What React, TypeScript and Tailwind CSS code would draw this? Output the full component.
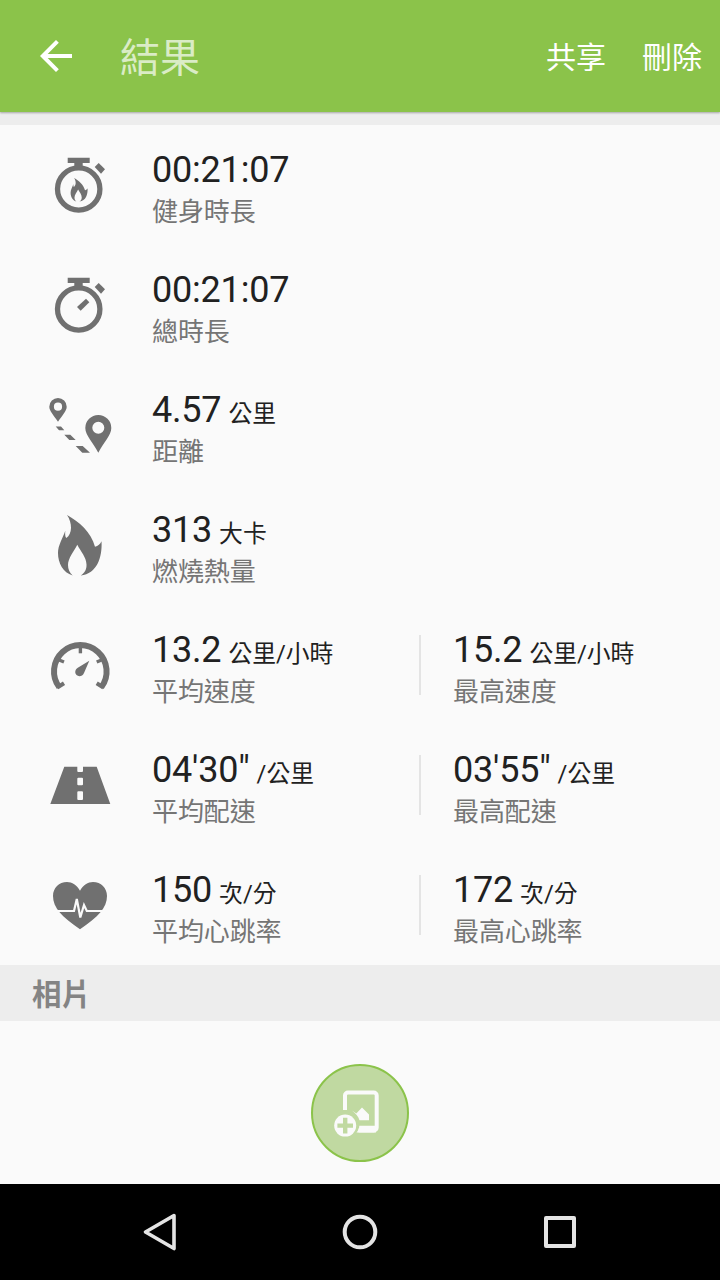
import type { ReactNode } from "react";

type Stat = {
  value: string;
  unit?: string;
  label: string;
};

type Row = {
  icon: ReactNode;
  stats: Stat[];
};

const FLAME =
  "M19 2C31 8.5 43 19 47 33.7C50 33 52.3 31 53.5 28.3C54.5 44 49 61 32.7 62.5C37 60 38.7 56 38.5 51.5C38.3 44 33 39 29.3 31.7C26 38.5 20 45 20 52C20 56 21.5 60 24.7 62.5C15 59.5 10 50 10 40C10 32 14.5 26 17.3 17.7C17 21 17 23.5 18.3 25C24.5 21 24.5 10 19 2Z";

function Icon({ children }: { children: ReactNode }) {
  return (
    <svg viewBox="0 0 64 64" className="size-16 shrink-0 fill-current text-[#707070]">
      {children}
    </svg>
  );
}

function Stopwatch({ children }: { children: ReactNode }) {
  return (
    <Icon>
      <circle cx="30.7" cy="36" r="21.2" fill="none" stroke="currentColor" strokeWidth="5.3" />
      <path d="M19.7 4.7H41.7V10H34.7V14.5H26.3V10H19.7Z" />
      <path d="M50.7 10L57 16.3L53 20.7L46.7 14Z" />
      {children}
    </Icon>
  );
}

function WorkoutIcon() {
  return (
    <Stopwatch>
      <path d={FLAME} transform="translate(18.7 24.2) scale(0.39)" />
    </Stopwatch>
  );
}

function DurationIcon() {
  return (
    <Stopwatch>
      <path d="M38 25.7L41.3 29.3L32.7 37.7L29 34Z" />
    </Stopwatch>
  );
}

function DistanceIcon() {
  return (
    <Icon>
      <path
        fillRule="evenodd"
        d="M10 5A8.7 8.7 0 0 0 1.3 13.7C1.3 18 6 22.5 10 28.7C14 22.5 18.7 18 18.7 13.7A8.7 8.7 0 0 0 10 5ZM10 9.6A4.1 4.1 0 1 1 10 17.8A4.1 4.1 0 1 1 10 9.6Z"
      />
      <path
        fillRule="evenodd"
        d="M50.3 22A13 13 0 0 0 37.3 35C37.3 42 45 49.5 50.3 59.7C55.6 49.5 63.3 42 63.3 35A13 13 0 0 0 50.3 22ZM50.3 28.7A6 6 0 1 1 50.3 40.7A6 6 0 1 1 50.3 28.7Z"
      />
      <path d="M7.7 33.5H13L16.3 37.3H11ZM16.3 41.7H22.3L27.7 47H21.3ZM27.7 53H34.7L42 59.7H34.3Z" />
    </Icon>
  );
}

function CaloriesIcon() {
  return (
    <Icon>
      <path d={FLAME} />
    </Icon>
  );
}

function SpeedIcon() {
  return (
    <Icon>
      <g fill="none" stroke="currentColor">
        <path d="M11.3 54.2A26.3 26.3 0 1 1 53.3 54.2" strokeWidth="6" />
        <path d="M32.4 14V20.3" strokeWidth="3.4" />
        <path d="M10.5 26.7L16 29M54.2 26.7L48.7 29" strokeWidth="3.4" />
        <path d="M9.3 54.5L16 50.3M55.4 54.5L48.7 50.3" strokeWidth="4" />
      </g>
      <path d="M41.3 27.7L36 40C34.5 43.5 30.5 44 28.5 42C26.5 39.8 27 36.5 29.8 34.8Z" />
    </Icon>
  );
}

function PaceIcon() {
  return (
    <Icon>
      <path
        fillRule="evenodd"
        d="M16.3 13.7H29.3V18A1 1 0 0 0 30.3 19H34A1 1 0 0 0 35 18V13.7H48.7L62.3 51H2.3ZM30.3 24.7A1 1 0 0 0 29.3 25.7V31.3A1 1 0 0 0 30.3 32.3H34A1 1 0 0 0 35 31.3V25.7A1 1 0 0 0 34 24.7ZM30.3 38.3A1 1 0 0 0 29.3 39.3V46A1 1 0 0 0 30.3 47H34A1 1 0 0 0 35 46V39.3A1 1 0 0 0 34 38.3Z"
      />
    </Icon>
  );
}

function HeartRateIcon() {
  return (
    <Icon>
      <path d="M32 17.7C29 12 24 9 19 9C11 9 5 15 5 23C5 35 14 44 32 56.3C50 44 59 35 59 23C59 15 53 9 45 9C40 9 35 12 32 17.7Z" />
      <path
        d="M5 38H26L28.8 26L32.3 44.5L36 32L38.8 38H59"
        fill="none"
        stroke="#fafafa"
        strokeWidth="2.2"
      />
    </Icon>
  );
}

const rows: Row[] = [
  { icon: <WorkoutIcon />, stats: [{ value: "00:21:07", label: "健身時長" }] },
  { icon: <DurationIcon />, stats: [{ value: "00:21:07", label: "總時長" }] },
  { icon: <DistanceIcon />, stats: [{ value: "4.57", unit: "公里", label: "距離" }] },
  { icon: <CaloriesIcon />, stats: [{ value: "313", unit: "大卡", label: "燃燒熱量" }] },
  {
    icon: <SpeedIcon />,
    stats: [
      { value: "13.2", unit: "公里/小時", label: "平均速度" },
      { value: "15.2", unit: "公里/小時", label: "最高速度" },
    ],
  },
  {
    icon: <PaceIcon />,
    stats: [
      { value: "04'30\"", unit: "/公里", label: "平均配速" },
      { value: "03'55\"", unit: "/公里", label: "最高配速" },
    ],
  },
  {
    icon: <HeartRateIcon />,
    stats: [
      { value: "150", unit: "次/分", label: "平均心跳率" },
      { value: "172", unit: "次/分", label: "最高心跳率" },
    ],
  },
];

function StatBlock({ value, unit, label }: Stat) {
  return (
    <div className="pt-3 whitespace-nowrap">
      <div className="flex h-[42px] items-baseline text-[#212121]">
        <span className="text-[36px] leading-10 tracking-[-0.2px]">{value}</span>
        {unit && <span className="ml-[7px] text-[23.8px] leading-8">{unit}</span>}
      </div>
      <div className="text-[26px] leading-10 tracking-[-0.1px] text-[#757575]">{label}</div>
    </div>
  );
}

function Header() {
  return (
    <header className="relative flex h-28 items-center bg-[#8bc34a] pr-[18px] pl-10 text-white shadow-[0_1px_2px_rgba(0,0,0,0.3)]">
      <button aria-label="返回">
        <svg viewBox="0 0 32 32" className="size-8" fill="none" stroke="currentColor" strokeWidth="4">
          <path d="M32 16H4M17.4 1.4L2.8 16L17.4 30.6" />
        </svg>
      </button>
      <h1 className="ml-12 pt-1.5 text-[40px] leading-[56px] text-white/70">結果</h1>
      <nav className="ml-auto flex gap-9 pt-1 text-[30px] leading-10">
        <button>共享</button>
        <button>刪除</button>
      </nav>
    </header>
  );
}

function AddPhotoButton() {
  return (
    <button
      aria-label="新增相片"
      className="flex size-[98px] items-center justify-center rounded-full border-2 border-[#8bc34a] bg-[#c0d9a1]"
    >
      <svg viewBox="2 0 48 48" className="size-12 overflow-visible">
        <path
          d="M11 21V6.5A3 3 0 0 1 14 3.5H39.7A3 3 0 0 1 42.7 6.5V38.5A3 3 0 0 1 39.7 41.5H24.5"
          fill="none"
          stroke="#fafafa"
          strokeWidth="4"
        />
        <path d="M18 21.5L22.3 24.5L28 18.5L35 25.5V31.3H25.5C24.5 27.5 21.5 24.5 18 21.5Z" fill="#fafafa" />
        <path d="M22.5 43.5C24.3 41.5 25.2 39.5 25.3 36.8H42V43.5Z" fill="#fafafa" />
        <circle cx="11.2" cy="36.6" r="11" fill="#fafafa" />
        <path d="M11.2 28.8V44.4M3.4 36.6H19" stroke="#c0d9a1" strokeWidth="4.4" />
      </svg>
    </button>
  );
}

function NavigationBar() {
  return (
    <footer className="flex h-24 items-center justify-center gap-[152px] bg-black text-[#e4e4e4]">
      <svg viewBox="0 0 48 48" className="size-12" fill="none" stroke="currentColor" strokeLinejoin="round">
        <path d="M38 7.5L9.5 24L38 40.5Z" strokeWidth="3.6" />
      </svg>
      <svg viewBox="0 0 48 48" className="size-12" fill="none" stroke="currentColor" strokeWidth="4">
        <circle cx="24" cy="24" r="15.3" />
      </svg>
      <svg viewBox="0 0 48 48" className="size-12" fill="none" stroke="currentColor" strokeWidth="4" strokeLinejoin="round">
        <path d="M10 10H38V38H10Z" />
      </svg>
    </footer>
  );
}

function App() {
  return (
    <div className="flex h-[1280px] w-[720px] flex-col overflow-hidden bg-[#fafafa] font-[Roboto,'Noto_Sans_CJK_TC',sans-serif]">
      <Header />
      <main className="flex-1">
        <div className="h-[13px] bg-[#ededed]" />
        <ul>
          {rows.map((row, i) => (
            <li key={i} className="flex h-[120px] items-center pl-12">
              {row.icon}
              <div className="ml-10 w-[267px]">
                <StatBlock {...row.stats[0]} />
              </div>
              {row.stats[1] && (
                <div className="flex items-center">
                  <div className="mr-8 h-[60px] w-0.5 bg-[#e4e4e4]" />
                  <StatBlock {...row.stats[1]} />
                </div>
              )}
            </li>
          ))}
        </ul>
        <h2 className="flex h-14 items-center bg-[#ededed] pt-1 pl-8 text-[29.5px] font-bold text-[#848484]">
          相片
        </h2>
        <div className="flex justify-center pt-[43px]">
          <AddPhotoButton />
        </div>
      </main>
      <NavigationBar />
    </div>
  );
}

export default App;
